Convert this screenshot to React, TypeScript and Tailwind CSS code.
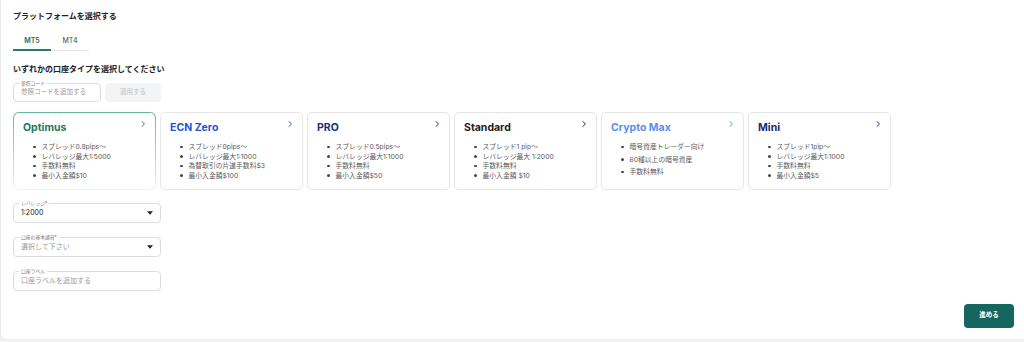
import React from "react";

const font = { fontFamily: 'Inter, "Noto Sans CJK JP", sans-serif' };

type Card = {
  name: string;
  color: string;
  items: string[];
  selected?: boolean;
  loose?: boolean;
};

const cards: Card[] = [
  { name: "Optimus", color: "text-[#1d7a60]", selected: true, items: ["スプレッド0.8pips〜", "レバレッジ最大1:5000", "手数料無料", "最小入金額$10"] },
  { name: "ECN Zero", color: "text-[#1f54d8]", items: ["スプレッド0pips〜", "レバレッジ最大1:1000", "為替取引の片道手数料$3", "最小入金額$100"] },
  { name: "PRO", color: "text-[#1d2f78]", items: ["スプレッド0.5pips〜", "レバレッジ最大1:1000", "手数料無料", "最小入金額$50"] },
  { name: "Standard", color: "text-[#1c1c1c]", items: ["スプレッド1 pip〜", "レバレッジ最大 1:2000", "手数料無料", "最小入金額 $10"] },
  { name: "Crypto Max", color: "text-[#5a8ef0]", loose: true, items: ["暗号資産トレーダー向け", "60種以上の暗号資産", "手数料無料"] },
  { name: "Mini", color: "text-[#1c2a6e]", items: ["スプレッド1pip〜", "レバレッジ最大1:1000", "手数料無料", "最小入金額$5"] },
];

function Chevron({ className }: { className: string }) {
  return (
    <svg viewBox="0 0 10 10" className={`w-[8px] h-[8px] ${className}`} fill="none" stroke="currentColor" strokeWidth="1.2" strokeLinecap="round" strokeLinejoin="round">
      <path d="M3.8 2 L6.8 5 L3.8 8" />
    </svg>
  );
}

function Caret() {
  return (
    <svg viewBox="0 0 10 6" className="w-[6px] h-[4px] text-[#222]" fill="currentColor">
      <path d="M0 0 L10 0 L5 6 Z" />
    </svg>
  );
}

function AccountCard({ c }: { c: Card }) {
  const inner = (
    <div className={`h-full rounded-[5px] bg-white pl-[9px] pr-[8px] pt-[8px] ${c.selected ? "" : "border border-[#e6e6e6]"}`}>
      <div className="flex justify-between items-start">
        <div className={`text-[10.5px] font-bold leading-[13px] ${c.color}`}>{c.name}</div>
        <Chevron className={`${c.color} -mt-[1px]`} />
      </div>
      <ul className={`mt-[8px] pl-[10px] ${c.loose ? "space-y-[3px]" : ""}`}>
        {c.items.map((it) => (
          <li key={it} className="flex items-center text-[6.8px] leading-[9.5px] text-[#5a5a5a]">
            <span className="inline-block w-[2.5px] h-[2.5px] rounded-full bg-[#444] mr-[6px] shrink-0" />
            {it}
          </li>
        ))}
      </ul>
    </div>
  );
  if (c.selected) {
    return (
      <div className="w-[143px] h-[78px] rounded-[6px] p-[1px] bg-gradient-to-b from-[#5fb59a] to-[#eef3f1]">
        {inner}
      </div>
    );
  }
  return <div className="w-[143px] h-[78px]">{inner}</div>;
}

function Field({ label, required, children }: { label: string; required?: boolean; children: React.ReactNode }) {
  return (
    <div className="relative w-[148px] h-[20px] border border-[#dcdcdc] rounded-[4px] flex items-center px-[7px]">
      <div className="absolute -top-[4px] left-[5px] bg-white px-[2px] text-[4.8px] leading-[6px] text-[#777]">
        {label}
        {required && <span className="text-[#e23b3b]">*</span>}
      </div>
      {children}
    </div>
  );
}

export default function App() {
  return (
    <div style={font} className="w-[1024px] h-[342px] bg-[#f4f4f4] overflow-hidden">
      <div className="w-[1030px] h-[340px] bg-white border-l border-b border-[#ececec] rounded-bl-[6px] pl-[12px] pt-[11px] relative">
        <div className="text-[8px] font-bold text-[#222] leading-[10px]">プラットフォームを選択する</div>
        <div className="mt-[15px] flex w-[76px]">
          <div className="w-[38px] text-center text-[7px] font-semibold text-[#1d6e63] pb-[4px] border-b-[2px] border-[#2a7a6e] leading-[9px]">MT5</div>
          <div className="w-[38px] text-center text-[7px] text-[#444] pb-[4px] border-b border-[#e5e5e5] leading-[9px] h-[15px]">MT4</div>
        </div>
        <div className="mt-[13px] text-[8px] font-bold text-[#222] leading-[10px]">いずれかの口座タイプを選択してください</div>
        <div className="mt-[9px] flex gap-[4px]">
          <div className="relative w-[88px] h-[19px] border border-[#dcdcdc] rounded-[4px] flex items-center px-[7px]">
            <div className="absolute -top-[4px] left-[5px] bg-white px-[2px] text-[4.8px] leading-[6px] text-[#777]">参照コード</div>
            <span className="text-[6.5px] text-[#9a9a9a]">参照コードを追加する</span>
          </div>
          <div className="w-[56px] h-[19px] rounded-[4px] bg-[#f3f4f5] flex items-center justify-center text-[6.5px] text-[#c4c4c4]">適用する</div>
        </div>
        <div className="mt-[10px] flex gap-[4px]">
          {cards.map((c) => (
            <AccountCard key={c.name} c={c} />
          ))}
        </div>
        <div className="mt-[13px] flex flex-col gap-[14px]">
          <Field label="レバレッジ" required>
            <span className="flex-1 text-[7px] text-[#222]">1:2000</span>
            <Caret />
          </Field>
          <Field label="口座の基本通貨" required>
            <span className="flex-1 text-[7px] text-[#9a9a9a]">選択して下さい</span>
            <Caret />
          </Field>
          <Field label="口座ラベル">
            <span className="flex-1 text-[7px] text-[#9a9a9a]">口座ラベルを追加する</span>
          </Field>
        </div>
        <div className="absolute left-[963px] top-[304px] w-[50px] h-[24px] rounded-[4px] bg-[#15665e] flex items-center justify-center text-[6.5px] font-bold text-white">進める</div>
      </div>
    </div>
  );
}
